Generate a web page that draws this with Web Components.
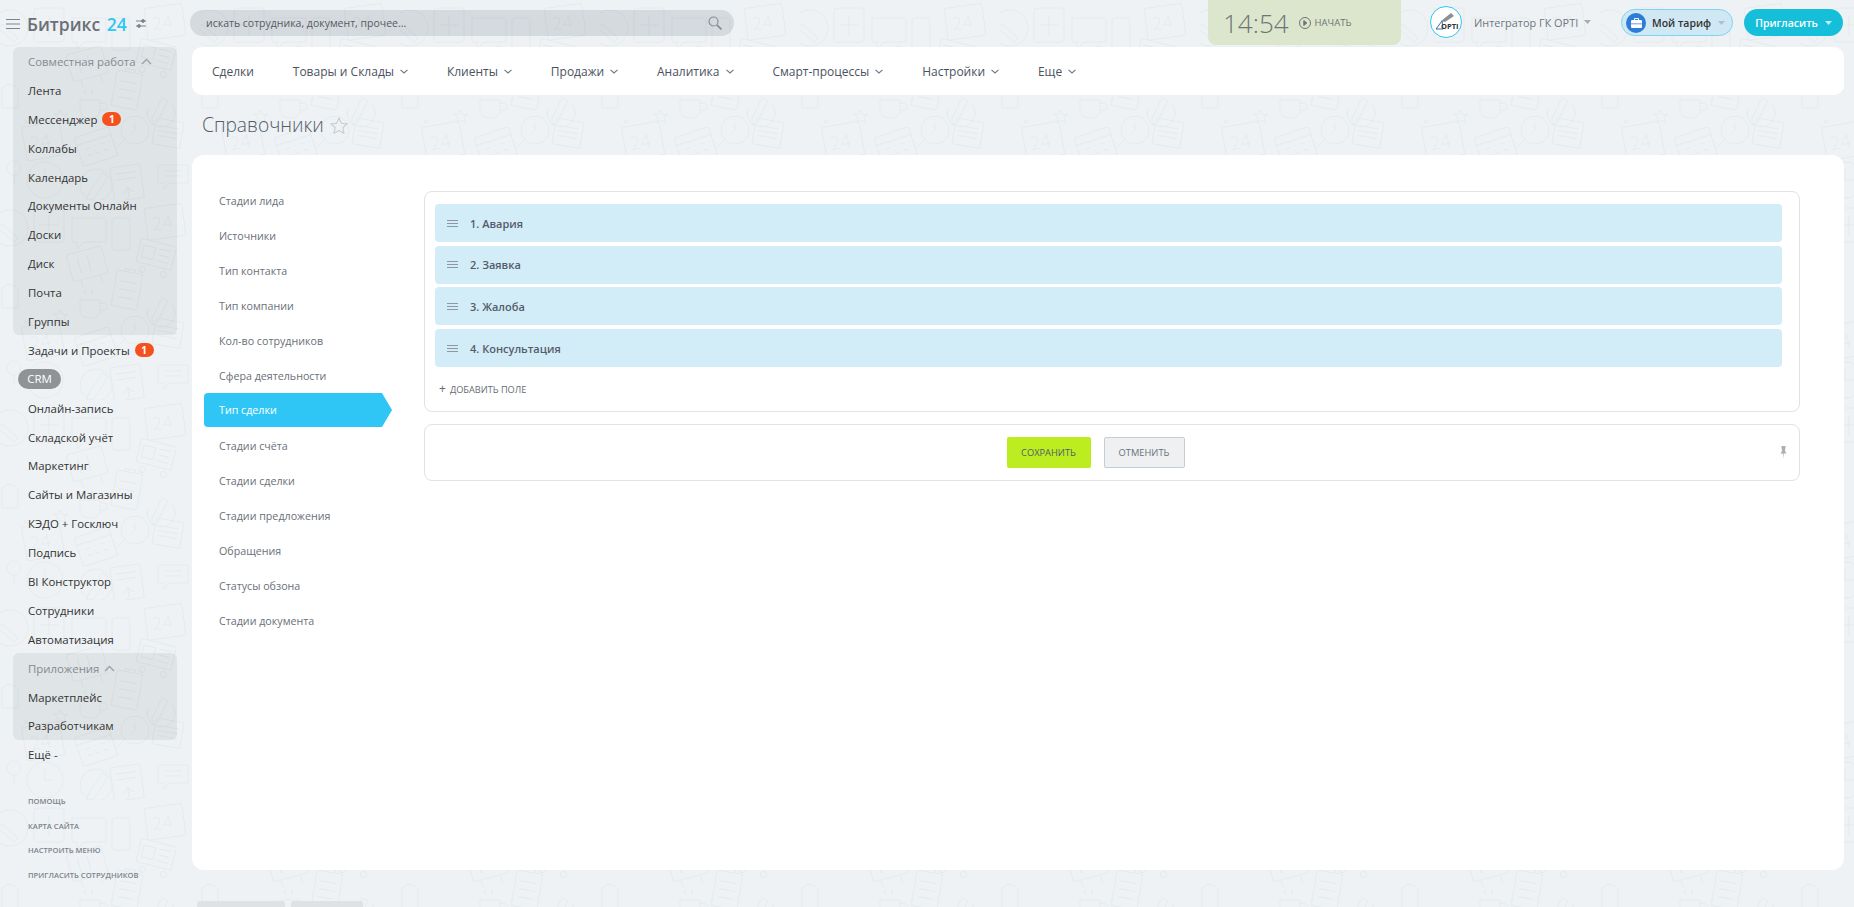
<!DOCTYPE html>
<html lang="ru">
<head>
<meta charset="utf-8">
<title>Справочники</title>
<style>
  html, body { margin: 0; height: 907px; overflow: hidden; }
  body { font-family: "Open Sans", "Liberation Sans", sans-serif; }
</style>
</head>
<body>
<b24-app>
  <b24-sidebar slot="sidebar"></b24-sidebar>
  <b24-topbar slot="top"></b24-topbar>
  <b24-menu slot="top"></b24-menu>
  <b24-title slot="top">Справочники</b24-title>
  <b24-card slot="top"></b24-card>
  <b24-ghost slot="top"></b24-ghost>
</b24-app>

<script>
(function () {
  // Every element gets its template from here
  function shadow(el, html) {
    const root = el.attachShadow({ mode: 'open' });
    root.innerHTML = html;
    return root;
  }

  // Doodle tile behind the whole page
  const s = '#e5eaee';
  const tile = `<svg xmlns="http://www.w3.org/2000/svg" width="200" height="200" viewBox="0 0 200 200"><g fill="none" stroke="${s}" stroke-width="1">
    <g transform="rotate(-10 43 140)"><rect x="24" y="124" width="38" height="34" rx="2"/><text x="30" y="148" font-family="Open Sans" font-weight="300" font-size="18" fill="${s}" stroke="none">24</text></g>
    <g transform="rotate(-18 95 147)"><rect x="78" y="132" width="36" height="30" rx="2"/><path d="M78 140h36M86 146h4M94 146h4M102 146h4M86 153h4M94 153h4M102 153h4"/></g>
    <circle cx="135" cy="130" r="14"/><path d="M135 122v8l-5 5M124 140l-9 9"/>
    <g transform="rotate(10 167 133)"><rect x="154" y="120" width="28" height="26" rx="1"/><path d="M158 127h20M158 132h20M158 137h20"/></g>
    <path d="M80 100h20v10a8 8 0 0 1-8 8h-4a8 8 0 0 1-8-8zM100 103h4a3 3 0 0 1 0 7h-4M85 94v-5M92 94v-5"/>
    <g transform="rotate(10 127 90)"><rect x="114" y="72" width="26" height="36" rx="2"/><path d="M122 72v-3h10v3M119 82h16M119 90h16M119 98h16"/></g>
    <path d="M152 118l10-20 6 3-10 20-6 4zM148 108a14 14 0 1 0 24-4"/>
    <g transform="rotate(-15 87 67)"><rect x="70" y="50" width="36" height="28" rx="2"/><path d="M78 78v8M98 78v8M80 56v16M90 56v16"/></g>
    <g transform="rotate(14 155 55)"><rect x="138" y="42" width="36" height="24" rx="1"/><path d="M142 48h12v12h-12zM158 48h12M158 54h12M158 60h12"/><circle cx="146" cy="72" r="3"/><circle cx="168" cy="72" r="3"/></g>
    <g transform="rotate(-8 163 22)"><rect x="146" y="6" width="38" height="32" rx="2"/><text x="152" y="29" font-family="Open Sans" font-weight="300" font-size="18" fill="${s}" stroke="none">24</text></g>
    <path d="M158 165h30v18h-18l-6 6v-6h-6z"/><path d="M164 171h18M164 176h18"/>
    <circle cx="45" cy="180" r="18"/><path d="M45 168v12h9"/>
    <circle cx="14" cy="168" r="7"/><path d="M14 175v9"/>
    <g transform="rotate(-8 125 182)"><rect x="112" y="166" width="30" height="34" rx="1"/><path d="M117 173h20M117 179h20"/><path d="M127 198v-10l-5 5m5-5l5 5"/></g>
    <path d="M88 195l14-22 6 4-14 22-7 3z"/><circle cx="96" cy="185" r="16"/>
    <path d="M2 24l16 14-4 4L-2 28z"/><circle cx="10" cy="28" r="18"/>
    <rect x="34" y="8" width="30" height="34" rx="3"/><path d="M49 15v20M39 25h20"/>
    <path d="M72 18h34v24H84l-7 7v-7h-5z"/><path d="M83 30h.1M89 30h.1M95 30h.1" stroke-width="2"/>
    <rect x="112" y="18" width="18" height="32" rx="3"/>
    <path d="M2 92a8 8 0 1 1 16 0v16H2zM24 120l4 4m0-4l-4 4M60 110l3 5 5-1-4 4 2 5-5-3-4 3 1-5-4-4h5z"/>
  </g></svg>`;
  const wallpaper = `url("data:image/svg+xml,${encodeURIComponent(tile)}")`;

  class B24App extends HTMLElement {
    constructor() {
      super();
      shadow(this, `<style>
        :host { display: grid; grid-template-columns: 192px 1fr; height: 907px; overflow: hidden;
          background-color: #eef2f4; background-image: ${wallpaper};
          font-family: "Open Sans", "Liberation Sans", sans-serif; }
        .main { min-width: 0; padding-right: 10px; display: flex; flex-direction: column; }
      </style>
      <slot name="sidebar"></slot>
      <div class="main"><slot name="top"></slot></div>`);
    }
  }

  const navStyle = `
    .row { display: flex; align-items: center; height: 28.9px; padding: 1px 0 0 28px; font-size: 11.4px; color: #333; white-space: nowrap; box-sizing: border-box; }
    .badge { margin-left: 5px; background: #f4511e; color: #fff; border-radius: 8px; width: 19px; height: 14px; font-size: 10px; font-weight: 700; line-height: 14px; text-align: center; }
  `;

  class B24Sidebar extends HTMLElement {
    constructor() {
      super();
      const row = (t, badge) => `<div class="row">${t}${badge ? `<span class="badge">${badge}</span>` : ''}</div>`;
      const chev = `<svg width="11" height="7" viewBox="0 0 11 7" fill="none" stroke="#9aa0a5" stroke-width="1.3"><path d="M1 6l4.5-4.5L10 6"/></svg>`;
      shadow(this, `<style>
        :host { display: block; }
        ${navStyle}
        .logo { height: 46.5px; display: flex; align-items: center; box-sizing: border-box; padding: 1px 0 0 6px; }
        .logo b { margin-left: 7px; font-size: 17.5px; font-weight: 600; color: #6a7076; white-space: nowrap; }
        .logo b i { font-style: normal; color: #2fc6f6; margin-left: 2px; }
        .logo .tune { margin-left: 9px; }
        .group { margin: 0 15px 0 13px; background: rgba(80, 84, 90, .09); border-radius: 6px; }
        .group .row { padding-left: 15px; }
        .head { color: #858b91; }
        .head svg { margin-left: 5px; }
        .crm { padding-left: 18px; }
        .crm span { background: #8f9396; color: #fff; height: 20px; width: 43px; border-radius: 10px; line-height: 20px; text-align: center; font-size: 11.5px; }
        .foot { margin-top: 20px; padding-left: 28px; display: flex; flex-direction: column; }
        .foot span { height: 24.8px; line-height: 24.8px; font-size: 7.6px; font-weight: 600; color: #7d838a; white-space: nowrap; }
      </style>
      <div class="logo">
        <svg width="14" height="10" viewBox="0 0 14 10" stroke="#7d848b" stroke-width="1"><path d="M0 .5h14M0 5h14M0 9.5h14"/></svg>
        <b>Битрикс <i>24</i></b>
        <svg class="tune" width="10" height="9" viewBox="0 0 10 9" fill="#7d848b" stroke="#7d848b"><path d="M0 2h10M0 7h10" stroke-width="1"/><circle cx="7" cy="2" r="1.4"/><circle cx="3" cy="7" r="1.4"/></svg>
      </div>
      <div class="group">
        <div class="row head">Совместная работа ${chev}</div>
        ${row('Лента')}${row('Мессенджер', 1)}${row('Коллабы')}${row('Календарь')}${row('Документы Онлайн')}${row('Доски')}${row('Диск')}${row('Почта')}${row('Группы')}
      </div>
      ${row('Задачи и Проекты', 1)}
      <div class="row crm"><span>CRM</span></div>
      ${row('Онлайн-запись')}${row('Складской учёт')}${row('Маркетинг')}${row('Сайты и Магазины')}${row('КЭДО + Госключ')}${row('Подпись')}${row('BI Конструктор')}${row('Сотрудники')}${row('Автоматизация')}
      <div class="group">
        <div class="row head">Приложения ${chev}</div>
        ${row('Маркетплейс')}${row('Разработчикам')}
      </div>
      ${row('Ещё -')}
      <div class="foot"><span>ПОМОЩЬ</span><span>КАРТА САЙТА</span><span>НАСТРОИТЬ МЕНЮ</span><span>ПРИГЛАСИТЬ СОТРУДНИКОВ</span></div>`);
    }
  }

  class B24Topbar extends HTMLElement {
    constructor() {
      super();
      const caret = c => `<svg width="7" height="4" viewBox="0 0 7 4" fill="${c}"><path d="M0 0h7L3.5 4z"/></svg>`;
      shadow(this, `<style>
        :host { display: flex; height: 47px; align-items: flex-start; white-space: nowrap; }
        .search { margin-top: 10px; width: 544px; flex: none; height: 26px; border-radius: 13px; background: rgba(83, 92, 105, .16); box-sizing: border-box;
          display: flex; align-items: center; justify-content: space-between; padding: 0 12px 0 16px; font-size: 10.5px; color: #555b62; margin-left: -2px; }
        .clock { margin-left: 474px; flex: none; width: 193px; height: 45px; background: #dce6cd; border-radius: 0 0 8px 8px; display: flex; align-items: center; padding-left: 15px; box-sizing: border-box; color: #6f7476; }
        .clock .t { font-size: 26px; font-weight: 300; }
        .clock svg { margin-left: 10px; }
        .clock .go { font-size: 9.5px; margin-left: 4px; }
        .user { margin-left: 29px; margin-top: 6px; display: flex; align-items: center; height: 32px; width: 191px; flex: none; font-size: 10.9px; color: #6e7680; }
        .user svg.a { flex: none; margin-right: 12px; }
        .user svg.c { margin-left: 6px; }
        .plan { margin-top: 9px; width: 112px; flex: none; height: 27px; border-radius: 14px; background: #cfe8f4; border: 1px solid #7fd4f2; box-sizing: border-box; display: flex; align-items: center; padding-left: 4px; font-size: 10.5px; font-weight: 600; color: #333; }
        .plan .ic { width: 20px; height: 20px; border-radius: 50%; background: #2d7dd8; display: flex; align-items: center; justify-content: center; margin-right: 6px; flex: none; }
        .plan svg.c { margin-left: 7px; }
        .inv { margin-left: 11px; margin-top: 9px; width: 99px; flex: none; height: 27px; border-radius: 14px; background: #15bfd9; color: #fff; font-size: 10.5px; font-weight: 600; display: flex; align-items: center; justify-content: center; }
        .inv svg { margin-left: 7px; }
      </style>
      <div class="search"><span>искать сотрудника, документ, прочее...</span>
        <svg width="14" height="14" viewBox="0 0 14 14" fill="none" stroke="#8a8f94" stroke-width="1.2"><circle cx="5.5" cy="5.5" r="4.5"/><path d="M9 9l4.500 4.500" stroke-width="1.800"/></svg></div>
      <div class="clock"><span class="t">14:54</span>
        <svg width="12" height="12" viewBox="0 0 12 12" fill="none" stroke="#6f7476"><circle cx="6" cy="6" r="5.500"/><path d="M4.800 3.500l3 2.500-3 2.500z" fill="#6f7476"/></svg>
        <span class="go">НАЧАТЬ</span></div>
      <div class="user">
        <svg class="a" width="32" height="32" viewBox="0 0 32 32"><circle cx="16" cy="16" r="15.500" fill="#fff" stroke="#2fc6f6"/><path d="M11 15L21 7l3 3-9 6z" fill="#8b9096"/><path d="M6 23L12 15l1 8z" fill="none" stroke="#2a6fb0"/><text x="11" y="23" font-family="Open Sans" font-size="7.500" font-weight="700" fill="#333">OPTI</text></svg>
        <span>Интегратор ГК OPTI</span><svg class="c" width="7" height="4" viewBox="0 0 7 4" fill="#a8adb2"><path d="M0 0h7L3.500 4z"/></svg>
      </div>
      <div class="plan"><span class="ic"><svg width="11" height="10" viewBox="0 0 11 10" fill="#fff"><path d="M4 0h3a1 1 0 0 1 1 1v1h2a1 1 0 0 1 1 1v6a1 1 0 0 1-1 1H1a1 1 0 0 1-1-1V3a1 1 0 0 1 1-1h2V1a1 1 0 0 1 1-1zm0 1v1h3V1zM0 5.500v.8h11v-.8z"/></svg></span>Мой тариф<svg class="c" width="7" height="4" viewBox="0 0 7 4" fill="#a9c3d0"><path d="M0 0h7L3.500 4z"/></svg></div>
      <div class="inv">Пригласить${caret('#bfeef6')}</div>`);
    }
  }

  class B24Menu extends HTMLElement {
    constructor() {
      super();
      const items = ['Сделки', 'Товары и Склады', 'Клиенты', 'Продажи', 'Аналитика', 'Смарт-процессы', 'Настройки', 'Еще'];
      const chev = `<svg width="8" height="5" viewBox="0 0 8 5" fill="none" stroke="#6f7680" stroke-width="1.100"><path d="M.5.8L4 4 7.500.8"/></svg>`;
      shadow(this, `<style>
        :host { display: flex; align-items: center; gap: 38.9px; height: 48px; box-sizing: border-box; padding: 1px 0 0 20px; background: #fff; border-radius: 10px; font-size: 12px; color: #4a525e; }
        span { display: inline-flex; align-items: center; white-space: nowrap; }
        svg { margin-left: 6px; }
      </style>` + items.map((t, i) => `<span>${t}${i ? chev : ''}</span>`).join(''));
    }
  }

  class B24Title extends HTMLElement {
    constructor() {
      super();
      shadow(this, `<style>
        :host { display: flex; align-items: center; height: 60px; padding: 0 0 2px 10px; box-sizing: border-box; font-size: 19.2px; font-weight: 300; color: #535c69; }
        svg { margin-left: 6px; margin-top: 3px; }
      </style><slot></slot>
      <svg width="18" height="17" viewBox="0 0 17 16" fill="none" stroke="#c6cbcf"><path d="M8.500 1l2.300 4.800 5.200.7-3.800 3.600.9 5.200-4.600-2.500-4.600 2.500.9-5.200L1 6.500l5.200-.7z"/></svg>`);
    }
  }

  class B24SideTabs extends HTMLElement {
    constructor() {
      super();
      const tabs = ['Стадии лида', 'Источники', 'Тип контакта', 'Тип компании', 'Кол-во сотрудников', 'Сфера деятельности', 'Тип сделки', 'Стадии счёта', 'Стадии сделки', 'Стадии предложения', 'Обращения', 'Статусы обзона', 'Стадии документа'];
      const active = 'Тип сделки';
      shadow(this, `<style>
        :host { display: flex; flex-direction: column; width: 188px; flex: none; padding: 28px 0 0 12px; }
        div { height: 35px; display: flex; align-items: center; padding-left: 15px; font-size: 10.700px; color: #6a7078; white-space: nowrap; box-sizing: border-box; }
        .on { height: 34px; margin-bottom: 1px; width: 188px; background: #2fc6f6; color: #fff; border-radius: 4px 0 0 4px; clip-path: polygon(0 0, 178px 0, 188px 50%, 178px 100%, 0 100%); }
      </style>` + tabs.map(t => `<div class="${t === active ? 'on' : ''}">${t}</div>`).join(''));
    }
  }

  class B24FieldRow extends HTMLElement {
    constructor() {
      super();
      shadow(this, `<style>
        :host { display: flex; align-items: center; height: 38px; background: #d3edf8; border-radius: 4px; padding-left: 12px; font-size: 11px; font-weight: 600; color: #535c69; }
        svg { margin-right: 12px; }
      </style>
      <svg width="11" height="7" viewBox="0 0 11 7" stroke="#8f98a1"><path d="M0 .5h11M0 3.500h11M0 6.500h11"/></svg><slot></slot>`);
    }
  }

  class B24Card extends HTMLElement {
    constructor() {
      super();
      shadow(this, `<style>
        :host { display: flex; height: 715px; background: #fff; border-radius: 12px; }
        .content { flex: 1; min-width: 0; padding: 36px 44px 0 32px; display: flex; flex-direction: column; gap: 12px; }
        .panel { border: 1px solid #e0e2e4; border-radius: 8px; background: #fff; }
        .fields { padding: 12px 17px 0 10px; display: flex; flex-direction: column; gap: 3.700px; height: 221px; box-sizing: border-box; }
        .add { margin: 12px 0 0 4px; font-size: 9.200px; color: #666c74; display: flex; align-items: center; gap: 4px; }
        .add b { font-weight: 400; font-size: 12px; line-height: 10px; }
        .actions { height: 57px; box-sizing: border-box; display: flex; align-items: center; justify-content: center; gap: 13px; position: relative; padding-right: 33px; }
        .btn { height: 31px; border-radius: 2px; display: flex; align-items: center; justify-content: center; box-sizing: border-box; font-size: 9.300px; color: #535c69; }
        .save { width: 84px; background: #bbed21; }
        .cancel { width: 81px; background: #eef0f2; border: 1px solid #c6cdd3; color: #6a7078; }
        .pin { position: absolute; right: 12px; top: 21px; }
      </style>
      <b24-side-tabs></b24-side-tabs>
      <div class="content">
        <div class="panel fields">
          <b24-field-row>1. Авария</b24-field-row>
          <b24-field-row>2. Заявка</b24-field-row>
          <b24-field-row>3. Жалоба</b24-field-row>
          <b24-field-row>4. Консультация</b24-field-row>
          <div class="add"><b>+</b>ДОБАВИТЬ ПОЛЕ</div>
        </div>
        <div class="panel actions">
          <div class="btn save">СОХРАНИТЬ</div>
          <div class="btn cancel">ОТМЕНИТЬ</div>
          <svg class="pin" width="7" height="13" viewBox="0 0 6 13" fill="#aab0b6"><path d="M1 0h4v1L4.500 5 6 7.500H3.400L3 13l-.4-5.500H0L1.500 5 1 1z"/></svg>
        </div>
      </div>`);
    }
  }

  class B24Ghost extends HTMLElement {
    constructor() {
      super();
      shadow(this, `<style>
        :host { display: flex; gap: 6px; margin: 31px 0 0 5px; }
        i { display: block; height: 20px; border-radius: 3px; background: #dfe2e5; }
      </style><i style="width:88px"></i><i style="width:72px"></i>`);
    }
  }

  customElements.define('b24-app', B24App);
  customElements.define('b24-sidebar', B24Sidebar);
  customElements.define('b24-topbar', B24Topbar);
  customElements.define('b24-menu', B24Menu);
  customElements.define('b24-title', B24Title);
  customElements.define('b24-side-tabs', B24SideTabs);
  customElements.define('b24-field-row', B24FieldRow);
  customElements.define('b24-card', B24Card);
  customElements.define('b24-ghost', B24Ghost);
})();
</script>
</body>
</html>
